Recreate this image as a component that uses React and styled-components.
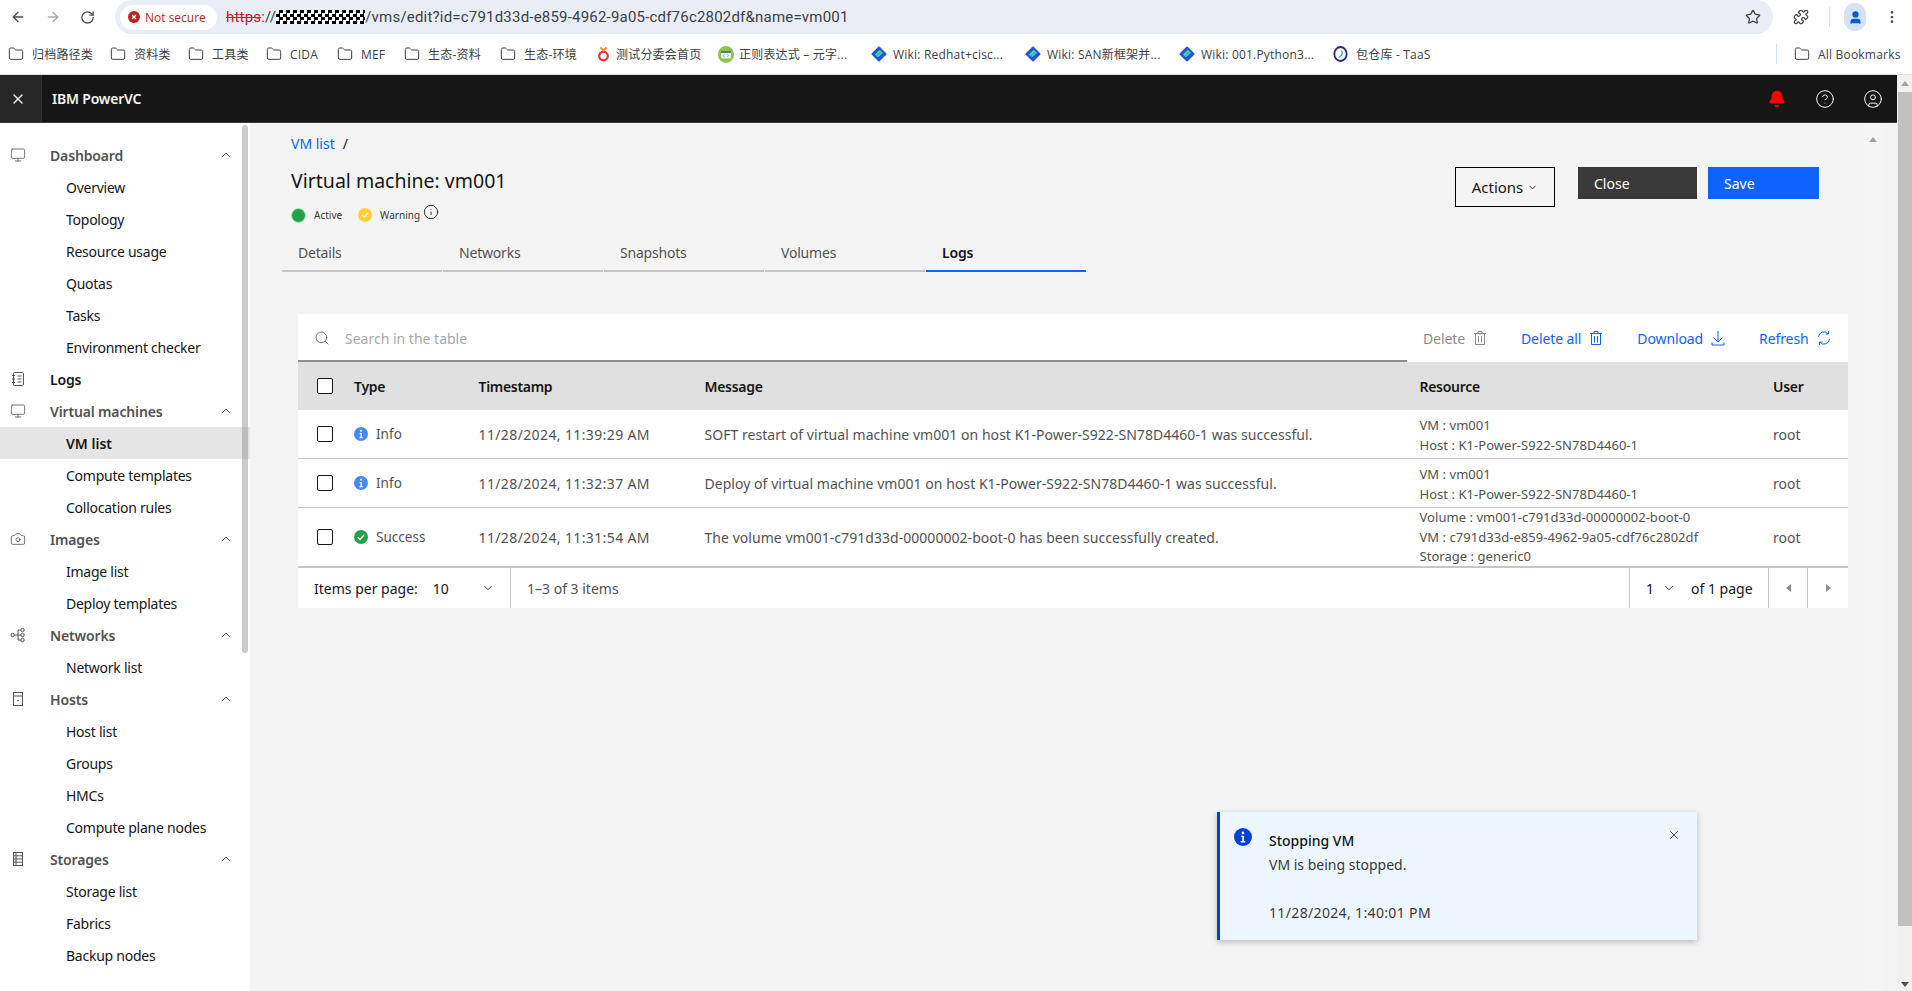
import React from 'react';
import styled, { createGlobalStyle } from 'styled-components';
import {
  ArrowLeft, ArrowRight, RotateCw, Star, Puzzle, EllipsisVertical, User, Folder,
  ChevronUp, ChevronDown, Monitor, Camera, Search, X, CircleHelp, CircleUser, Bell, Info,
} from 'lucide-react';

const UI_FONT = `"Noto Sans", "Noto Sans CJK SC", sans-serif`;

const GlobalStyle = createGlobalStyle`
  html, body { margin: 0; padding: 0; height: 100%; overflow: hidden; background: #fff; }
  * { box-sizing: border-box; }
  body { font-family: ${UI_FONT}; font-size: 14px; color: #161616; }
`;

const Page = styled.div`
  width: 1912px;
  height: 991px;
  display: flex;
  flex-direction: column;
  overflow: hidden;
`;

/* browser chrome */
const ToolBar = styled.div`
  height: 34px;
  display: flex;
  align-items: center;
  color: #474747;
`;
const NavBtn = styled.div`
  width: 35px;
  display: flex;
  justify-content: center;
  color: ${p => (p.$off ? '#a9a9a9' : '#474747')};
`;
const UrlPill = styled.div`
  margin-left: 10px;
  width: 1658px;
  height: 34px;
  border-radius: 17px;
  background: #e9edf6;
  display: flex;
  align-items: center;
  padding: 0 12px 0 5px;
`;
const SecureChip = styled.div`
  height: 25px;
  width: 97px;
  border-radius: 13px;
  background: #fff;
  display: flex;
  align-items: center;
  gap: 5px;
  padding-left: 8px;
  font: 12px "Open Sans", sans-serif;
  color: #b3261e;
`;
const UrlText = styled.div`
  margin-left: 9px;
  font: 15px Roboto, sans-serif;
  letter-spacing: 0.2px;
  color: #3c4043;
  display: flex;
  align-items: center;
`;
const Https = styled.span`
  color: #c5221f;
  text-decoration: line-through;
`;
const Redacted = styled.span`
  display: inline-block;
  width: 89px;
  height: 14px;
  background: repeating-conic-gradient(#000 0 25%, #fff 0 50%) 0 0 / 7px 7px;
`;
const PillEnd = styled.div`
  margin-left: auto;
  display: flex;
`;
const ExtBtn = styled.div`
  margin-left: 12px;
  width: 32px;
  display: flex;
  justify-content: center;
`;
const ToolSep = styled.div`
  margin-left: 12px;
  width: 1px;
  height: 20px;
  background: #d3e3fd;
`;
const Profile = styled.div`
  margin-left: 14px;
  width: 22px;
  height: 28px;
  border-radius: 11px;
  background: #d3e3fd;
  color: #0b57d0;
  display: flex;
  align-items: center;
  justify-content: center;
`;
const DotsBtn = styled.div`
  margin-left: 16px;
  width: 20px;
  display: flex;
  justify-content: center;
`;

const BookmarkBar = styled.div`
  height: 41px;
  border-bottom: 1px solid #e0e0e0;
  display: flex;
  align-items: center;
  padding-left: 8px;
  font: 12px "Open Sans", "Noto Sans CJK SC", sans-serif;
  letter-spacing: 0.2px;
  color: #3c4043;
`;
const Bookmark = styled.div`
  flex: none;
  width: ${p => p.$w}px;
  display: flex;
  align-items: center;
  gap: ${p => p.$gap || 8}px;
  white-space: nowrap;
  svg { flex: none; }
`;
const BookmarkSep = styled.div`
  width: 1px;
  height: 20px;
  margin-right: 17px;
  background: #d3e3fd;
`;

/* web page */
const WebArea = styled.div`
  flex: 1;
  display: flex;
  min-height: 0;
`;
const AppColumn = styled.div`
  flex: 1;
  display: flex;
  flex-direction: column;
  min-width: 0;
  position: relative;
`;
const OuterScroll = styled.div`
  width: 15px;
  background: #f1f1f1;
  position: relative;
`;
const OuterThumb = styled.div`
  position: absolute;
  left: 1px;
  right: 0;
  top: 17px;
  height: 834px;
  background: #c1c1c1;
`;
const ArrowUp = styled.div`
  position: absolute;
  left: ${p => p.$left}px;
  top: ${p => p.$top}px;
  width: 0;
  height: 0;
  border-left: 4px solid transparent;
  border-right: 4px solid transparent;
  border-bottom: 5px solid #a3a3a3;
`;
const ArrowDown = styled.div`
  position: absolute;
  left: 4px;
  bottom: 4px;
  width: 0;
  height: 0;
  border-left: 4px solid transparent;
  border-right: 4px solid transparent;
  border-top: 5px solid #505050;
`;

const Header = styled.header`
  height: 48px;
  background: #161616;
  border-bottom: 1px solid #393939;
  display: flex;
  align-items: stretch;
  color: #f4f4f4;
`;
const MenuClose = styled.div`
  width: 42px;
  padding-right: 6px;
  background: #262626;
  border-right: 1px solid #333;
  display: flex;
  align-items: center;
  justify-content: center;
`;
const Brand = styled.div`
  margin-left: 10px;
  display: flex;
  align-items: center;
  font-weight: 600;
  font-size: 14px;
  letter-spacing: -0.2px;
`;
const HeaderIcons = styled.div`
  margin-left: auto;
  display: flex;
`;
const HeaderBtn = styled.div`
  width: 48px;
  display: flex;
  align-items: center;
  justify-content: center;
  color: ${p => p.$alert ? '#ff0000' : '#f4f4f4'};
`;

const Body = styled.div`
  flex: 1;
  display: flex;
  min-height: 0;
`;

const Sidebar = styled.nav`
  width: 250px;
  flex: none;
  background: #fff;
  padding-top: 16px;
  position: relative;
`;
const SideThumb = styled.div`
  position: absolute;
  left: 242px;
  top: 2px;
  width: 6px;
  height: 528px;
  border-radius: 3px;
  background: rgba(150, 150, 150, 0.5);
`;
const GroupRow = styled.div`
  height: 32px;
  display: flex;
  align-items: center;
  padding: 0 16px 0 10px;
  gap: 24px;
  font-weight: 600;
  letter-spacing: -0.15px;
  color: ${p => (p.$dark ? '#161616' : '#525252')};
`;
const GroupIcon = styled.span`
  width: 16px;
  height: 16px;
  display: flex;
  color: #525252;
`;
const GroupChevron = styled.span`
  margin-left: auto;
  display: flex;
  color: #525252;
`;
const SubRow = styled.div`
  height: 32px;
  display: flex;
  align-items: center;
  padding-left: 66px;
  letter-spacing: ${p => (p.$active ? 0 : -0.25)}px;
  background: ${p => (p.$active ? '#e5e5e5' : 'transparent')};
  font-weight: ${p => (p.$active ? 600 : 400)};
`;

const Main = styled.main`
  flex: 1;
  min-width: 0;
  display: flex;
  background: #f4f4f4;
  position: relative;
`;
const Content = styled.div`
  flex: 1;
  min-width: 0;
  padding: 11px 16px 0 32px;
`;
const InnerScroll = styled.div`
  width: 18px;
  margin-right: 15px;
  background: #f5f5f5;
  position: relative;
`;
const Breadcrumb = styled.div`
  padding-left: 9px;
  line-height: 20px;
  display: flex;
  gap: 8px;
`;
const CrumbLink = styled.a`
  color: #0f62fe;
`;
const TitleRow = styled.div`
  margin-top: 13px;
  display: flex;
  justify-content: space-between;
  padding: 0 29px 0 9px;
`;
const Title = styled.h1`
  margin: 0;
  font-size: 19.5px;
  line-height: 28px;
  font-weight: 400;
  color: #161616;
`;
const StatusRow = styled.div`
  margin-top: 12px;
  height: 16px;
  display: flex;
  align-items: center;
  font-size: 10px;
  color: #393939;
`;
const StatusLabel = styled.span`
  margin: 0 ${p => p.$after || 16}px 0 8px;
`;
const StatusInfo = styled.span`
  display: flex;
  margin-top: -7px;
  color: #161616;
`;
const Buttons = styled.div`
  display: flex;
  align-items: flex-start;
`;
const ActionsBtn = styled.div`
  width: 100px;
  height: 40px;
  border: 1px solid #000;
  display: flex;
  align-items: center;
  justify-content: center;
  gap: 4px;
  margin-right: 23px;
  font-size: 15px;
`;
const SolidBtn = styled.div`
  width: ${p => p.$w}px;
  height: 32px;
  margin-right: ${p => p.$mr || 0}px;
  padding-left: 16px;
  display: flex;
  align-items: center;
  color: #fff;
  background: ${p => p.$bg};
`;

const Tabs = styled.div`
  margin-top: 9px;
  display: flex;
  gap: 1px;
`;
const Tab = styled.div`
  width: 160px;
  height: 40px;
  padding: 2px 0 0 16px;
  display: flex;
  align-items: center;
  letter-spacing: -0.2px;
  border-bottom: 2px solid ${p => (p.$active ? '#0f62fe' : '#c6c6c6')};
  color: ${p => (p.$active ? '#161616' : '#525252')};
  font-weight: ${p => (p.$active ? 600 : 400)};
`;

const TableWrap = styled.section`
  margin: 42px 0 0 16px;
  background: #fff;
`;
const TableTools = styled.div`
  height: 48px;
  display: flex;
  align-items: stretch;
`;
const SearchBox = styled.div`
  width: 1109px;
  padding: 2px 0 0 16px;
  border-bottom: 2px solid #8d8d8d;
  display: flex;
  align-items: center;
  gap: 15px;
  color: #a8a8a8;
  svg { color: #525252; }
`;
const ToolAction = styled.div`
  display: flex;
  align-items: center;
  gap: 8px;
  margin-left: ${p => p.$ml}px;
  letter-spacing: -0.1px;
  color: ${p => (p.$off ? '#8d8d8d' : '#0f62fe')};
`;

const GRID = '56px 124.5px 226px 715px 353.5px 1fr';
const HeadRow = styled.div`
  height: 48px;
  background: #e0e0e0;
  display: grid;
  grid-template-columns: ${GRID};
  align-items: center;
  font-weight: 600;
  letter-spacing: -0.3px;
`;
const DataRow = styled.div`
  height: ${p => p.$h}px;
  display: grid;
  grid-template-columns: ${GRID};
  align-items: center;
  border-bottom: ${p => (p.$last ? 2 : 1)}px solid #c6c6c6;
  color: #525252;
  letter-spacing: 0.04px;
`;
const CheckCell = styled.div`
  padding-left: 19px;
  display: flex;
`;
const Check = styled.span`
  width: 16px;
  height: 16px;
  border: 1px solid #161616;
  border-radius: 2px;
  background: #fff;
`;
const TypeCell = styled.div`
  display: flex;
  align-items: center;
  gap: 8px;
  font-size: 13.5px;
`;
const TimeCell = styled.div`
  letter-spacing: 0.38px;
`;
const ResourceCell = styled.div`
  padding-top: ${p => (p.$lh === 20 ? 1 : 0)}px;
  font-size: 13px;
  line-height: ${p => p.$lh}px;
`;

const Pager = styled.div`
  height: 40px;
  display: flex;
  align-items: stretch;
  color: #161616;
`;
const PageSize = styled.div`
  width: 213px;
  padding-left: 16px;
  display: flex;
  align-items: center;
  border-right: 1px solid #c6c6c6;
`;
const SizeValue = styled.span`
  margin-left: 15px;
`;
const SizeChevron = styled.span`
  margin-left: auto;
  margin-right: 15px;
  display: flex;
`;
const ItemCount = styled.div`
  flex: 1;
  padding-left: 16px;
  display: flex;
  align-items: center;
  color: #525252;
`;
const PageSelect = styled.div`
  width: 139px;
  padding-left: 16px;
  display: flex;
  align-items: center;
  border-left: 1px solid #c6c6c6;
  gap: 8px;
`;
const OfPages = styled.span`
  margin-left: 7px;
`;
const PageBtn = styled.div`
  width: ${p => p.$w || 39}px;
  display: flex;
  align-items: center;
  justify-content: center;
  border-left: 1px solid #c6c6c6;
`;
const Caret = styled.span`
  width: 0;
  height: 0;
  border-top: 4px solid transparent;
  border-bottom: 4px solid transparent;
  ${p => (p.$dir === 'left' ? 'border-right: 5px solid #8d8d8d;' : 'border-left: 5px solid #8d8d8d;')}
`;

const Toast = styled.div`
  position: absolute;
  left: 967px;
  top: 689px;
  width: 480px;
  height: 128px;
  background: #edf5ff;
  border-left: 3px solid #0043ce;
  box-shadow: 0 2px 6px rgba(0, 0, 0, 0.25);
  display: flex;
  padding: 16px 0 0 14px;
`;
const ToastBody = styled.div`
  margin-left: 17px;
  padding-top: 3px;
  line-height: 20px;
`;
const ToastTitle = styled.div`
  font-weight: 500;
`;
const ToastText = styled.div`
  margin-top: 4px;
  color: #393939;
`;
const ToastTime = styled.div`
  margin-top: 28px;
  color: #393939;
  letter-spacing: 0.35px;
`;
const ToastClose = styled.span`
  position: absolute;
  right: 16px;
  top: 16px;
  display: flex;
`;

const LogsIcon = () => (
  <svg width="16" height="16" viewBox="0 0 16 16" fill="none" stroke="currentColor">
    <rect x="3.5" y="1.5" width="10" height="13" rx="1" />
    <path d="M2 4.5h3M2 8h3M2 11.5h3M7.5 5h4M7.5 8h4M7.5 11h4" />
  </svg>
);
const NetworkIcon = () => (
  <svg width="16" height="16" viewBox="0 0 16 16" fill="none" stroke="currentColor">
    <circle cx="2.7" cy="8" r="1.7" />
    <circle cx="12.5" cy="3" r="1.7" />
    <circle cx="12.5" cy="8" r="1.7" />
    <circle cx="12.5" cy="13" r="1.7" />
    <path d="M4.5 8h6.3M8 3h2.8M8 13h2.8M8 3v10" />
  </svg>
);
const HostIcon = () => (
  <svg width="16" height="16" viewBox="0 0 16 16" fill="none" stroke="currentColor">
    <rect x="3.5" y="1.5" width="9" height="13" />
    <path d="M3.5 5h9" />
    <circle cx="8" cy="9.5" r="0.8" fill="currentColor" stroke="none" />
  </svg>
);
const StorageIcon = () => (
  <svg width="16" height="16" viewBox="0 0 16 16" fill="none" stroke="currentColor">
    <rect x="3.5" y="1.5" width="9" height="13" />
    <path d="M3.5 4.8h9M3.5 8h9M3.5 11.2h9M6 1.5v13" />
  </svg>
);
const TrashIcon = () => (
  <svg width="14" height="16" viewBox="0 0 14 16" fill="none" stroke="currentColor">
    <path d="M1 3.5h12M5 3.5v-2h4v2M2.5 3.5v11h9v-11M5.5 6v6.5M8.5 6v6.5" />
  </svg>
);
const DownloadIcon = () => (
  <svg width="14" height="16" viewBox="0 0 14 16" fill="none" stroke="currentColor">
    <path d="M7 1v10.5M2.5 7.5 7 12l4.5-4.5M1 12.5v2.5h12v-2.5" />
  </svg>
);
const RefreshIcon = () => (
  <svg width="14" height="16" viewBox="0 0 14 16" fill="none" stroke="currentColor">
    <path d="M1.5 7A5.5 5.5 0 0 1 11 3.6M12.5 9A5.5 5.5 0 0 1 3 12.4" />
    <path d="M11.5 1v3h-3M2.5 15v-3h3" />
  </svg>
);
const InfoDot = ({ size = 14, fill = '#4589ff' }) => (
  <svg width={size} height={size} viewBox="0 0 14 14">
    <circle cx="7" cy="7" r="7" fill={fill} />
    <circle cx="7" cy="3.8" r="1" fill="#fff" />
    <path d="M5.6 6h2.2v4.2h1v1H5.2v-1h1.2V7H5.6z" fill="#fff" />
  </svg>
);
const SuccessDot = () => (
  <svg width="14" height="14" viewBox="0 0 14 14">
    <circle cx="7" cy="7" r="7" fill="#24a148" />
    <path d="M3.8 7.2 6 9.4l4.2-4.6" fill="none" stroke="#fff" strokeWidth="1.4" />
  </svg>
);
const ActiveDot = () => (
  <svg width="15" height="15" viewBox="0 0 15 15">
    <circle cx="7.5" cy="7.5" r="7" fill="#24a148" stroke="#a7f0ba" />
  </svg>
);
const WarningDot = () => (
  <svg width="14" height="14" viewBox="0 0 14 14">
    <circle cx="7" cy="7" r="7" fill="#fdd13a" />
    <path d="M4.2 7.2 6.2 9.2l3.6-4" fill="none" stroke="#fff" strokeWidth="1.1" />
  </svg>
);
const NotSecureIcon = () => (
  <svg width="12" height="12" viewBox="0 0 12 12">
    <circle cx="6" cy="6" r="6" fill="#b3261e" />
    <path d="M4 4l4 4M8 4l-4 4" stroke="#fff" strokeWidth="1.4" />
  </svg>
);
const WikiLogo = () => (
  <svg width="16" height="16" viewBox="0 0 16 16">
    <rect x="2.4" y="2.4" width="11.2" height="11.2" rx="1" fill="#2259c9" transform="rotate(45 8 8)" />
    <path d="M4 8.5 8.5 4l2 1-5 5zM7.5 11l4.5-4.5-1.5-1-5 5z" fill="#3fd6c8" />
  </svg>
);
const RedLogo = () => (
  <svg width="13" height="16" viewBox="0 0 13 16" fill="none">
    <circle cx="6.5" cy="10" r="4.3" stroke="#e3342f" strokeWidth="2.2" />
    <path d="M3.5 1.5 6.5 4.5 9.5 1.5" stroke="#f08a24" strokeWidth="1.8" />
  </svg>
);
const RegexLogo = () => (
  <svg width="16" height="17" viewBox="0 0 16 17">
    <ellipse cx="8" cy="8.5" rx="8" ry="8.5" fill="#8bc34a" />
    <rect x="3" y="5" width="10" height="7.5" rx="1" fill="#e8f5e9" />
    <rect x="3" y="5" width="10" height="2" fill="#5b7a6a" />
    <path d="M6.5 8.5 5.5 9.7l1 1.2M9.5 8.5l1 1.2-1 1.2" fill="none" stroke="#5b7a6a" strokeWidth="0.7" />
  </svg>
);
const TaasLogo = () => (
  <svg width="15" height="16" viewBox="0 0 15 16" fill="none">
    <ellipse cx="7.5" cy="8" rx="6.2" ry="7" stroke="#1d2f7a" strokeWidth="1.8" />
    <path d="M6 2.5c4 2.5 3 6.5-1 9 3 1 6-3 4.500-6.500z" fill="#3aa0e0" />
  </svg>
);

const BOOKMARKS = [
  { label: '归档路径类', w: 102 }, { label: '资料类', w: 78 }, { label: '工具类', w: 78 }, { label: 'CIDA', w: 71 },
  { label: 'MEF', w: 67 }, { label: '生态-资料', w: 96 }, { label: '生态-环境', w: 97 },
  { label: '测试分委会首页', logo: <RedLogo />, gap: 6, w: 121 },
  { label: '正则表达式 – 元字...', logo: <RegexLogo />, gap: 5, w: 153 },
  { label: 'Wiki: Redhat+cisc...', logo: <WikiLogo />, gap: 6, w: 154 },
  { label: 'Wiki: SAN新框架并...', logo: <WikiLogo />, gap: 6, w: 154 },
  { label: 'Wiki: 001.Python3...', logo: <WikiLogo />, gap: 6, w: 154 },
  { label: '包仓库 - TaaS', logo: <TaasLogo />, gap: 8, w: 443 },
];

const NAV = [
  { label: 'Dashboard', icon: <Monitor size={16} strokeWidth={1.2} />, items: ['Overview', 'Topology', 'Resource usage', 'Quotas', 'Tasks', 'Environment checker'] },
  { label: 'Logs', icon: <LogsIcon />, dark: true },
  { label: 'Virtual machines', icon: <Monitor size={16} strokeWidth={1.2} />, items: ['VM list', 'Compute templates', 'Collocation rules'] },
  { label: 'Images', icon: <Camera size={16} strokeWidth={1.2} />, items: ['Image list', 'Deploy templates'] },
  { label: 'Networks', icon: <NetworkIcon />, items: ['Network list'] },
  { label: 'Hosts', icon: <HostIcon />, items: ['Host list', 'Groups', 'HMCs', 'Compute plane nodes'] },
  { label: 'Storages', icon: <StorageIcon />, items: ['Storage list', 'Fabrics', 'Backup nodes'] },
];

const ROWS = [
  {
    h: 49, lh: 20, type: 'Info', time: '11/28/2024, 11:39:29 AM',
    message: 'SOFT restart of virtual machine vm001 on host K1-Power-S922-SN78D4460-1 was successful.',
    resource: ['VM : vm001', 'Host : K1-Power-S922-SN78D4460-1'],
  },
  {
    h: 49, lh: 20, type: 'Info', time: '11/28/2024, 11:32:37 AM',
    message: 'Deploy of virtual machine vm001 on host K1-Power-S922-SN78D4460-1 was successful.',
    resource: ['VM : vm001', 'Host : K1-Power-S922-SN78D4460-1'],
  },
  {
    h: 60, lh: 19.5, type: 'Success', time: '11/28/2024, 11:31:54 AM', last: true,
    message: 'The volume vm001-c791d33d-00000002-boot-0 has been successfully created.',
    resource: ['Volume : vm001-c791d33d-00000002-boot-0', 'VM : c791d33d-e859-4962-9a05-cdf76c2802df', 'Storage : generic0'],
  },
];

export default function App() {
  return (
    <Page>
      <GlobalStyle />
      <ToolBar>
        <NavBtn><ArrowLeft size={16} /></NavBtn>
        <NavBtn $off><ArrowRight size={16} /></NavBtn>
        <NavBtn><RotateCw size={15} /></NavBtn>
        <UrlPill>
          <SecureChip><NotSecureIcon />Not secure</SecureChip>
          <UrlText>
            <Https>https</Https>://<Redacted />/vms/edit?id=c791d33d-e859-4962-9a05-cdf76c2802df&amp;name=vm001
          </UrlText>
          <PillEnd><Star size={16} /></PillEnd>
        </UrlPill>
        <ExtBtn><Puzzle size={16} /></ExtBtn>
        <ToolSep />
        <Profile><User size={15} fill="currentColor" /></Profile>
        <DotsBtn><EllipsisVertical size={16} /></DotsBtn>
      </ToolBar>
      <BookmarkBar>
        {BOOKMARKS.map(b => (
          <Bookmark key={b.label} $w={b.w} $gap={b.gap}>
            {b.logo || <Folder size={16} strokeWidth={1.5} />}
            {b.label}
          </Bookmark>
        ))}
        <BookmarkSep />
        <Bookmark><Folder size={16} strokeWidth={1.5} />All Bookmarks</Bookmark>
      </BookmarkBar>
      <WebArea>
        <AppColumn>
          <Header>
            <MenuClose><X size={16} /></MenuClose>
            <Brand>IBM PowerVC</Brand>
            <HeaderIcons>
              <HeaderBtn $alert><Bell size={18} fill="currentColor" /></HeaderBtn>
              <HeaderBtn><CircleHelp size={20} strokeWidth={1.2} /></HeaderBtn>
              <HeaderBtn><CircleUser size={20} strokeWidth={1.2} /></HeaderBtn>
            </HeaderIcons>
          </Header>
          <Body>
            <Sidebar>
              {NAV.map(g => (
                <React.Fragment key={g.label}>
                  <GroupRow $dark={g.dark}>
                    <GroupIcon>{g.icon}</GroupIcon>
                    {g.label}
                    {g.items && <GroupChevron><ChevronUp size={16} strokeWidth={1.4} /></GroupChevron>}
                  </GroupRow>
                  {(g.items || []).map(i => <SubRow key={i} $active={i === 'VM list'}>{i}</SubRow>)}
                </React.Fragment>
              ))}
              <SideThumb />
            </Sidebar>
            <Main>
              <Content>
                <Breadcrumb><CrumbLink>VM list</CrumbLink><span>/</span></Breadcrumb>
                <TitleRow>
                  <div>
                    <Title>Virtual machine: vm001</Title>
                    <StatusRow>
                      <ActiveDot /><StatusLabel>Active</StatusLabel>
                      <WarningDot /><StatusLabel $after={3}>Warning</StatusLabel>
                      <StatusInfo><Info size={16} strokeWidth={1.3} /></StatusInfo>
                    </StatusRow>
                  </div>
                  <Buttons>
                    <ActionsBtn>Actions<ChevronDown size={11} strokeWidth={2} /></ActionsBtn>
                    <SolidBtn $w={119} $mr={11} $bg="#393939">Close</SolidBtn>
                    <SolidBtn $w={111} $bg="#0f62fe">Save</SolidBtn>
                  </Buttons>
                </TitleRow>
                <Tabs>
                  {['Details', 'Networks', 'Snapshots', 'Volumes', 'Logs'].map(t => (
                    <Tab key={t} $active={t === 'Logs'}>{t}</Tab>
                  ))}
                </Tabs>
                <TableWrap>
                  <TableTools>
                    <SearchBox><Search size={16} strokeWidth={1.2} />Search in the table</SearchBox>
                    <ToolAction $ml={16} $off>Delete<TrashIcon /></ToolAction>
                    <ToolAction $ml={34}>Delete all<TrashIcon /></ToolAction>
                    <ToolAction $ml={34}>Download<DownloadIcon /></ToolAction>
                    <ToolAction $ml={34}>Refresh<RefreshIcon /></ToolAction>
                  </TableTools>
                  <HeadRow>
                    <CheckCell><Check /></CheckCell>
                    <div>Type</div>
                    <div>Timestamp</div>
                    <div>Message</div>
                    <div>Resource</div>
                    <div>User</div>
                  </HeadRow>
                  {ROWS.map(r => (
                    <DataRow key={r.time} $h={r.h} $last={r.last}>
                      <CheckCell><Check /></CheckCell>
                      <TypeCell>{r.type === 'Info' ? <InfoDot /> : <SuccessDot />}{r.type}</TypeCell>
                      <TimeCell>{r.time}</TimeCell>
                      <div>{r.message}</div>
                      <ResourceCell $lh={r.lh}>
                        {r.resource.map(l => <div key={l}>{l}</div>)}
                      </ResourceCell>
                      <div>root</div>
                    </DataRow>
                  ))}
                  <Pager>
                    <PageSize>
                      Items per page:
                      <SizeValue>10</SizeValue>
                      <SizeChevron><ChevronDown size={14} strokeWidth={1.5} /></SizeChevron>
                    </PageSize>
                    <ItemCount>1–3 of 3 items</ItemCount>
                    <PageSelect>1<ChevronDown size={14} strokeWidth={1.5} /><OfPages>of 1 page</OfPages></PageSelect>
                    <PageBtn><Caret $dir="left" /></PageBtn>
                    <PageBtn $w={41}><Caret $dir="right" /></PageBtn>
                  </Pager>
                </TableWrap>
              </Content>
              <InnerScroll><ArrowUp $left={5} $top={14} /></InnerScroll>
              <Toast>
                <InfoDot size={18} fill="#0043ce" />
                <ToastBody>
                  <ToastTitle>Stopping VM</ToastTitle>
                  <ToastText>VM is being stopped.</ToastText>
                  <ToastTime>11/28/2024, 1:40:01 PM</ToastTime>
                </ToastBody>
                <ToastClose><X size={14} strokeWidth={1.3} /></ToastClose>
              </Toast>
            </Main>
          </Body>
        </AppColumn>
        <OuterScroll>
          <ArrowUp $left={4} $top={6} />
          <OuterThumb />
          <ArrowDown />
        </OuterScroll>
      </WebArea>
    </Page>
  );
}
